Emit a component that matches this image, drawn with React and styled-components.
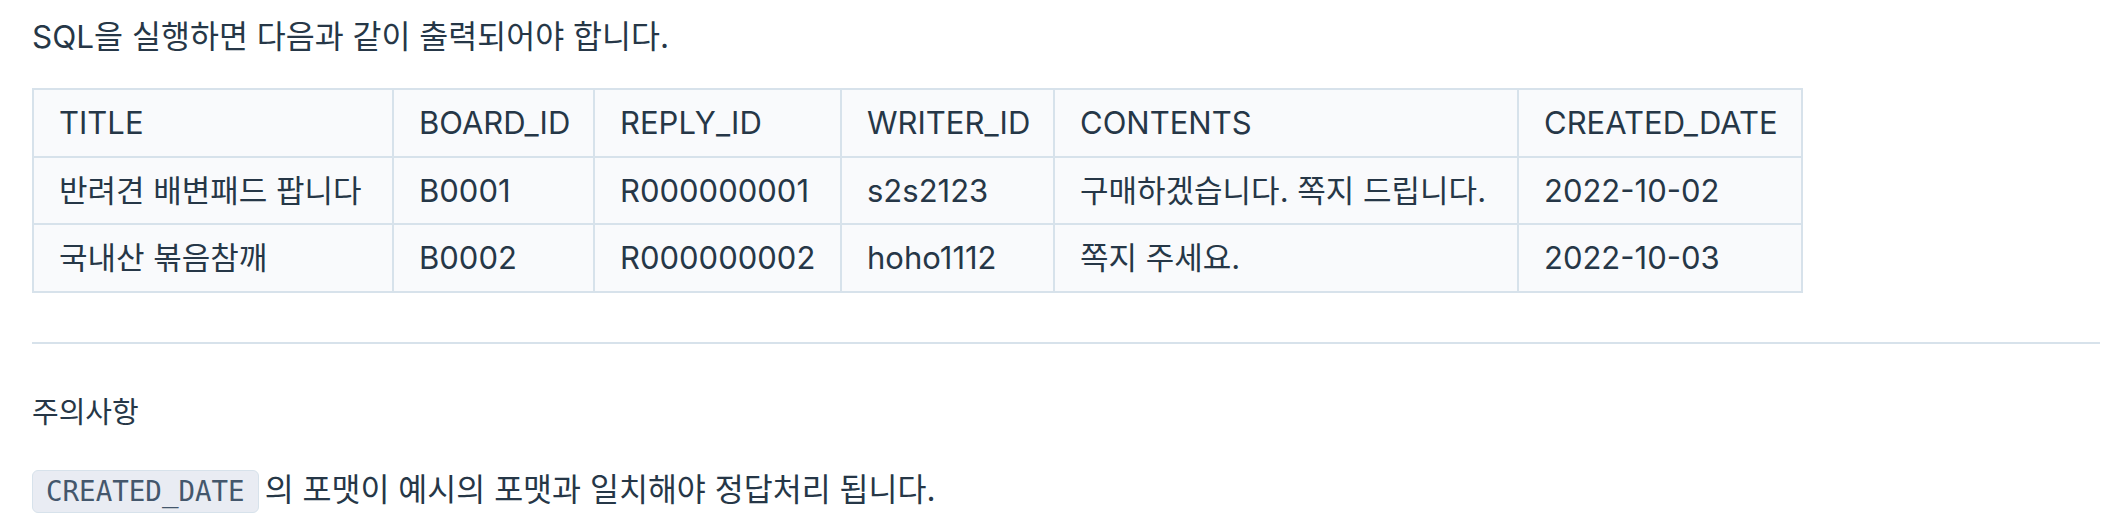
import React from "react";
import styled, { createGlobalStyle } from "styled-components";

const GlobalStyle = createGlobalStyle`
  body {
    margin: 0;
    background: #ffffff;
    font-family: Inter, "Noto Sans CJK KR", sans-serif;
    color: #263747;
  }
`;

const columns = [
  { key: "title", label: "TITLE", width: 360 },
  { key: "boardId", label: "BOARD_ID", width: 201 },
  { key: "replyId", label: "REPLY_ID", width: 247 },
  { key: "writerId", label: "WRITER_ID", width: 213 },
  { key: "contents", label: "CONTENTS", width: 464 },
  { key: "createdDate", label: "CREATED_DATE", width: 284 },
];

const rows = [
  {
    title: "반려견 배변패드 팝니다",
    boardId: "B0001",
    replyId: "R000000001",
    writerId: "s2s2123",
    contents: "구매하겠습니다. 쪽지 드립니다.",
    createdDate: "2022-10-02",
  },
  {
    title: "국내산 볶음참깨",
    boardId: "B0002",
    replyId: "R000000002",
    writerId: "hoho1112",
    contents: "쪽지 주세요.",
    createdDate: "2022-10-03",
  },
];

const App = () => {
  return (
    <Wrapper>
      <GlobalStyle />
      <Paragraph>SQL을 실행하면 다음과 같이 출력되어야 합니다.</Paragraph>
      <ResultTable>
        <colgroup>
          {columns.map((col) => (
            <col key={col.key} style={{ width: col.width }} />
          ))}
        </colgroup>
        <thead>
          <tr>
            {columns.map((col) => (
              <Cell as='th' key={col.key}>
                {col.label}
              </Cell>
            ))}
          </tr>
        </thead>
        <tbody>
          {rows.map((row) => (
            <tr key={row.boardId}>
              {columns.map((col) => (
                <Cell key={col.key}>{row[col.key]}</Cell>
              ))}
            </tr>
          ))}
        </tbody>
      </ResultTable>
      <Divider />
      <SubHeading>주의사항</SubHeading>
      <Paragraph $gap={32}>
        <Code>CREATED_DATE</Code>의 포맷이 예시의 포맷과 일치해야 정답처리
        됩니다.
      </Paragraph>
    </Wrapper>
  );
};

const Wrapper = styled.main`
  padding: 13px 10px 0 32px;
`;

const Paragraph = styled.p`
  margin: ${(p) => p.$gap || 0}px 0 0;
  font-size: 31.5px;
  line-height: 47px;
  color: #263747;
`;

const ResultTable = styled.table`
  margin-top: 28px;
  width: 1769px;
  table-layout: fixed;
  border-collapse: collapse;
  background: #f9fafc;
  border: 2px solid #d7e2eb;
`;

const Cell = styled.td`
  padding: 10px 25px;
  border: 2px solid #d7e2eb;
  font-size: 31px;
  line-height: 45.5px;
  font-weight: 400;
  text-align: left;
  color: #263747;
  white-space: nowrap;
`;

const Divider = styled.hr`
  margin: 49px 0 0;
  border: none;
  border-top: 2px solid #d7e2eb;
`;

const SubHeading = styled.h5`
  margin: 47px 0 0;
  font-size: 29px;
  line-height: 43px;
  font-weight: 400;
  color: #263747;
`;

const Code = styled.code`
  display: inline-block;
  margin-right: 6px;
  padding: 5px 13px;
  font-family: "DejaVu Sans Mono", monospace;
  font-size: 27.5px;
  line-height: 31px;
  color: #44576c;
  background: #e9ecf3;
  border: 1px solid #d7e2eb;
  border-radius: 6px;
  vertical-align: middle;
`;

export default App;
